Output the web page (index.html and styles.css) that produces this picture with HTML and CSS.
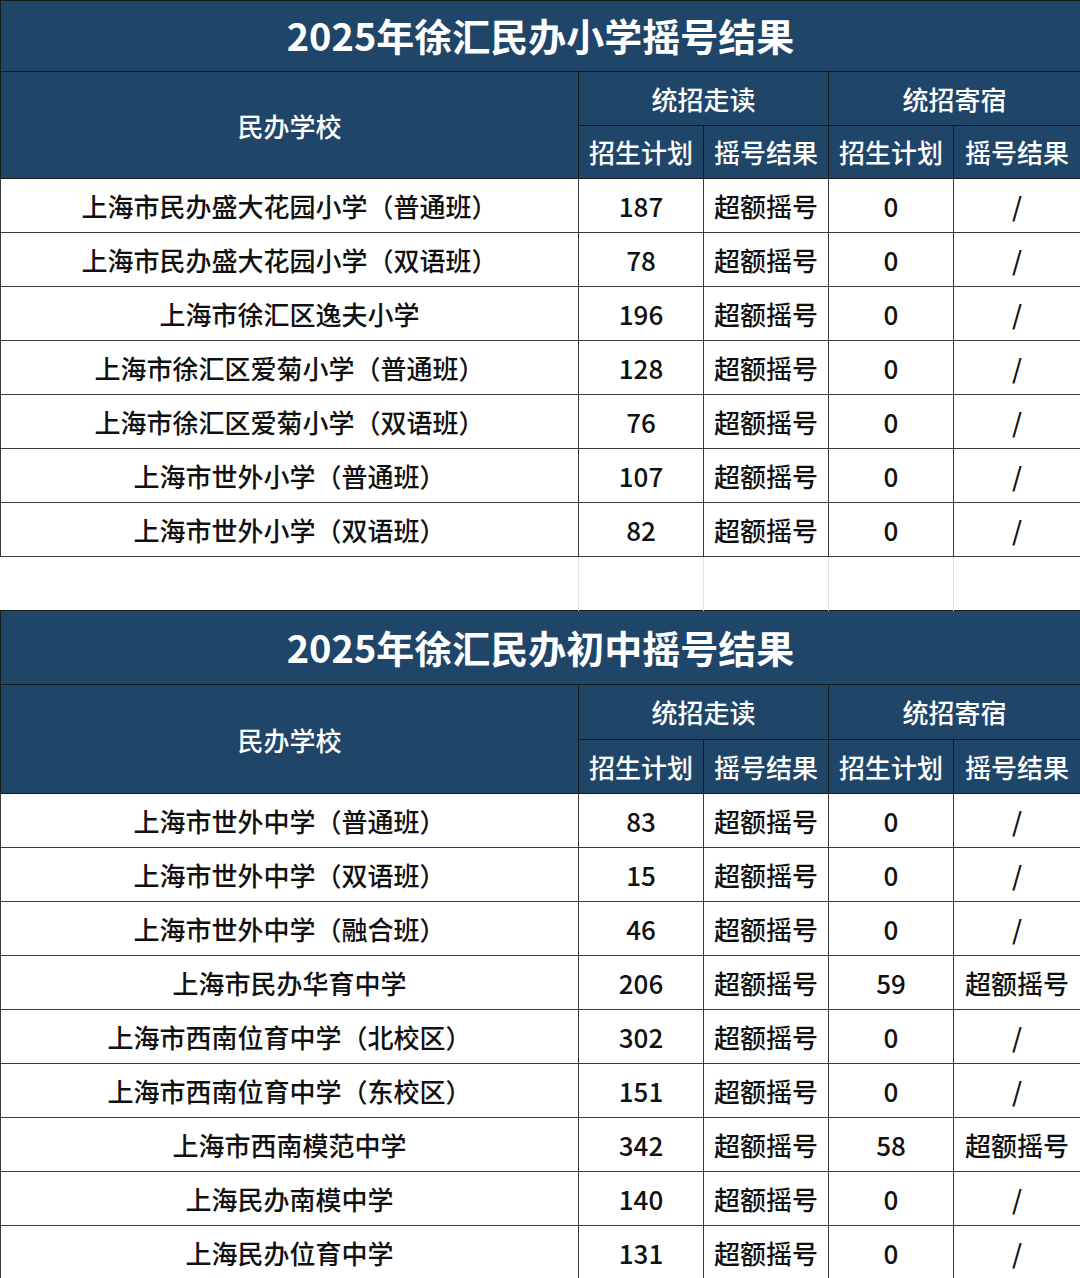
FILE: index.html
```html
<!DOCTYPE html>
<html lang="zh-CN">
<head>
<meta charset="utf-8">
<link rel="stylesheet" href="styles.css">
</head>
<body>
<table class="sheet">
  <colgroup>
    <col class="c-name"><col class="c-num"><col class="c-num"><col class="c-num"><col class="c-last">
  </colgroup>
  <tbody>
    <tr class="title"><td colspan="5">2025年徐汇民办小学摇号结果</td></tr>
    <tr class="head"><td rowspan="2" class="hname">民办学校</td><td colspan="2">统招走读</td><td colspan="2">统招寄宿</td></tr>
    <tr class="head"><td>招生计划</td><td>摇号结果</td><td>招生计划</td><td>摇号结果</td></tr>
    <tr class="row"><td>上海市民办盛大花园小学（普通班）</td><td>187</td><td>超额摇号</td><td>0</td><td>/</td></tr>
    <tr class="row"><td>上海市民办盛大花园小学（双语班）</td><td>78</td><td>超额摇号</td><td>0</td><td>/</td></tr>
    <tr class="row"><td>上海市徐汇区逸夫小学</td><td>196</td><td>超额摇号</td><td>0</td><td>/</td></tr>
    <tr class="row"><td>上海市徐汇区爱菊小学（普通班）</td><td>128</td><td>超额摇号</td><td>0</td><td>/</td></tr>
    <tr class="row"><td>上海市徐汇区爱菊小学（双语班）</td><td>76</td><td>超额摇号</td><td>0</td><td>/</td></tr>
    <tr class="row"><td>上海市世外小学（普通班）</td><td>107</td><td>超额摇号</td><td>0</td><td>/</td></tr>
    <tr class="row"><td>上海市世外小学（双语班）</td><td>82</td><td>超额摇号</td><td>0</td><td>/</td></tr>
    <tr class="gap"><td></td><td></td><td></td><td></td><td></td></tr>
    <tr class="title title2"><td colspan="5">2025年徐汇民办初中摇号结果</td></tr>
    <tr class="head head2"><td rowspan="2" class="hname">民办学校</td><td colspan="2">统招走读</td><td colspan="2">统招寄宿</td></tr>
    <tr class="head head2"><td>招生计划</td><td>摇号结果</td><td>招生计划</td><td>摇号结果</td></tr>
    <tr class="row"><td>上海市世外中学（普通班）</td><td>83</td><td>超额摇号</td><td>0</td><td>/</td></tr>
    <tr class="row"><td>上海市世外中学（双语班）</td><td>15</td><td>超额摇号</td><td>0</td><td>/</td></tr>
    <tr class="row"><td>上海市世外中学（融合班）</td><td>46</td><td>超额摇号</td><td>0</td><td>/</td></tr>
    <tr class="row"><td>上海市民办华育中学</td><td>206</td><td>超额摇号</td><td>59</td><td>超额摇号</td></tr>
    <tr class="row"><td>上海市西南位育中学（北校区）</td><td>302</td><td>超额摇号</td><td>0</td><td>/</td></tr>
    <tr class="row"><td>上海市西南位育中学（东校区）</td><td>151</td><td>超额摇号</td><td>0</td><td>/</td></tr>
    <tr class="row"><td>上海市西南模范中学</td><td>342</td><td>超额摇号</td><td>58</td><td>超额摇号</td></tr>
    <tr class="row"><td>上海民办南模中学</td><td>140</td><td>超额摇号</td><td>0</td><td>/</td></tr>
    <tr class="row"><td>上海民办位育中学</td><td>131</td><td>超额摇号</td><td>0</td><td>/</td></tr>
  </tbody>
</table>
</body>
</html>
```

FILE: styles.css
```css
html, body {
  margin: 0;
  padding: 0;
  background: #ffffff;
}
body {
  width: 1080px;
  height: 1278px;
  overflow: hidden;
  font-family: "Noto Sans CJK SC", "Noto Sans", sans-serif;
}
.sheet {
  width: 1080px;
  border-collapse: collapse;
  table-layout: fixed;
}
.c-name { width: 578px; }
.c-num { width: 125px; }
.c-last { width: 127px; }
.sheet td {
  text-align: center;
  vertical-align: middle;
  padding: 0;
  white-space: nowrap;
}
.title td {
  height: 67px;
  background: #1f4569;
  color: #ffffff;
  font-size: 38px;
  font-weight: 700;
  border: 1px solid #1a1a1a;
  padding-bottom: 3px;
}
.title2 td {
  height: 70px;
}
.head td {
  height: 52.5px;
  background: #1f4569;
  color: #ffffff;
  font-size: 26px;
  font-weight: 500;
  border: 1px solid #1a1a1a;
}
.head2 td {
  height: 53.5px;
}
.row td {
  height: 53px;
  color: #111111;
  font-size: 26px;
  font-weight: 500;
  border: 1px solid #3a3a3a;
}
.gap td {
  height: 53px;
  border-left: 1px solid #e2e2e2;
  border-right: 1px solid #e2e2e2;
}
.gap td:first-child {
  border-left: none;
}
```
